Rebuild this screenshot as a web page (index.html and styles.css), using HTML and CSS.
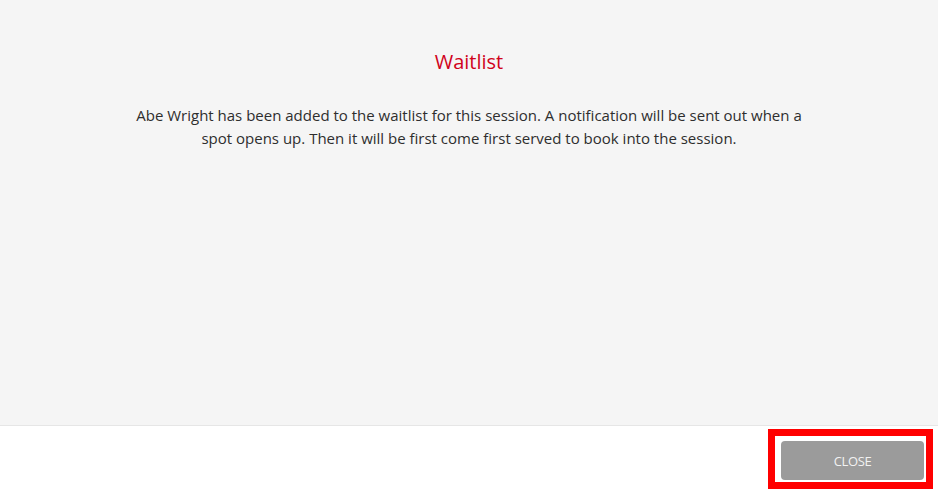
FILE: index.html
```html
<!DOCTYPE html>
<html>
<head>
<meta charset="utf-8">
<link rel="stylesheet" href="styles.css">
</head>
<body>
<div class="modal">
  <div class="modal-body">
    <h2 class="modal-title">Waitlist</h2>
    <p class="modal-text">Abe Wright has been added to the waitlist for this session. A notification will be sent out when a spot opens up. Then it will be first come first served to book into the session.</p>
  </div>
  <div class="modal-footer">
    <div class="highlight">
      <button class="btn-close">CLOSE</button>
    </div>
  </div>
</div>
</body>
</html>
```
FILE: styles.css
```css
html, body {
  margin: 0;
  padding: 0;
  background: #ffffff;
}
body {
  font-family: "Open Sans", "Noto Sans", sans-serif;
  color: #333333;
}
.modal {
  width: 938px;
  height: 493px;
  display: flex;
  flex-direction: column;
}
.modal-body {
  height: 426px;
  background: #f5f5f5;
  border-bottom: 1px solid #e6e6e6;
  box-sizing: border-box;
  padding: 48px 128px 0;
  text-align: center;
}
.modal-title {
  margin: 0;
  font-size: 20px;
  font-weight: 400;
  color: #d0021b;
  line-height: 28px;
}
.modal-text {
  margin: 28px 0 0;
  font-size: 15px;
  line-height: 23px;
  color: #2e2e2e;
}
.modal-footer {
  display: flex;
  justify-content: flex-end;
  padding: 3px 5px 0 0;
}
.highlight {
  border: 7px solid #ff0000;
  padding: 5px 2px 2px 6px;
}
.btn-close {
  width: 143px;
  height: 39px;
  border: none;
  border-radius: 4px;
  background: #9b9b9b;
  color: #f2f2f2;
  font-family: "Open Sans", "Noto Sans", sans-serif;
  font-size: 13px;
  letter-spacing: -0.4px;
  padding: 0;
}
```
